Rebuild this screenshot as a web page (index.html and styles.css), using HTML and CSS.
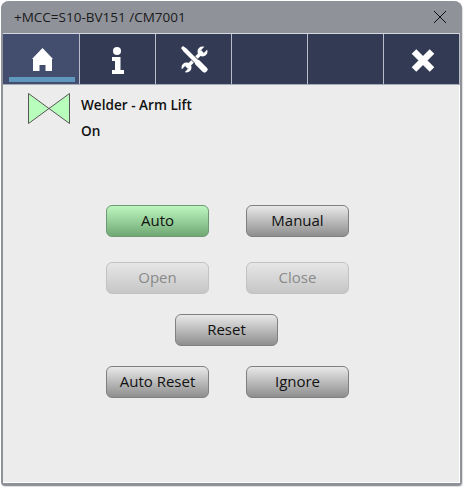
FILE: index.html
```html
<!DOCTYPE html>
<html lang="en">
<head>
    <meta charset="UTF-8">
    <meta name="viewport" content="width=device-width, initial-scale=1.0">
    <title>+MCC=S10-BV151 /CM7001</title>
    <link rel="stylesheet" href="styles.css">
</head>
<body>
    <div class="window">
        <div class="title-bar">
            <span class="title-text">+MCC=S10-BV151 /CM7001</span>
            <svg class="title-close" width="14" height="14" viewBox="0 0 14 14">
                <path d="M1 1 L13 13 M13 1 L1 13" stroke="#111" stroke-width="1" fill="none"/>
            </svg>
        </div>

        <div class="tabs">
            <div class="tab active">
                <svg class="icon-home" width="21" height="24" viewBox="0 0 21 24">
                    <path d="M10.500 0 L21 11 H0 Z M1 11 H20 V23 H13.500 V17 H7.500 V23 H1 Z" fill="#fff"/>
                </svg>
            </div>
            <div class="tab">
                <svg width="13" height="28" viewBox="0 0 13 28">
                    <circle cx="6" cy="5" r="4" fill="#fff"/>
                    <path d="M1 11 H9.500 V24 H13 V28 H1 V24 H4 V15 H1 Z" fill="#fff"/>
                </svg>
            </div>
            <div class="tab">
                <svg class="icon-tools" width="27" height="28" viewBox="0 0 27 28">
                    <g fill="none" stroke="#fff">
                        <path d="M5.500 21.500 L21.500 5.500" stroke-width="3.500"/>
                        <circle cx="21.500" cy="5.500" r="3.500" stroke-width="3"/>
                        <circle cx="5.500" cy="21.500" r="3.500" stroke-width="3"/>
                    </g>
                    <g fill="none" stroke="#333b54">
                        <path d="M22 5 L27 0 M5 22 L0 27" stroke-width="4"/>
                        <path d="M6 6 L18 18" stroke-width="5.500"/>
                    </g>
                    <path d="M0 2 L2 0 L5.500 2.500 L18 15 L15 18 L2.500 5.500 Z" fill="#fff"/>
                    <path d="M17 17 L23.500 23.500" stroke="#fff" stroke-width="6" stroke-linecap="round"/>
                </svg>
            </div>
            <div class="tab"></div>
            <div class="tab"></div>
            <div class="tab">
                <svg class="icon-close" width="24" height="24" viewBox="0 0 24 24">
                    <path d="M3 3.500 L21 21.500 M21 3.500 L3 21.500" stroke="#fff" stroke-width="6.500" fill="none"/>
                </svg>
            </div>
        </div>

        <div class="content">
            <div class="device-head">
                <svg class="valve" width="42" height="31" viewBox="0 0 42 31">
                    <path d="M0.500 0.500 L21 15.500 L41.500 0.500 V30.500 L21 15.500 L0.500 30.500 Z" fill="#b9fdbd" stroke="#555" stroke-width="1"/>
                </svg>
                <div class="device-info">
                    <div class="device-name">Welder - Arm Lift</div>
                    <div class="device-state">On</div>
                </div>
            </div>

            <div class="button-panel">
                <div class="btn-row row-mode">
                    <button class="btn btn-on">Auto</button>
                    <button class="btn">Manual</button>
                </div>
                <div class="btn-row row-open">
                    <button class="btn btn-off">Open</button>
                    <button class="btn btn-off">Close</button>
                </div>
                <div class="btn-row row-reset">
                    <button class="btn">Reset</button>
                </div>
                <div class="btn-row">
                    <button class="btn">Auto Reset</button>
                    <button class="btn">Ignore</button>
                </div>
            </div>
        </div>
    </div>
</body>
</html>
```

FILE: styles.css
```css
html, body {
    margin: 0;
    padding: 0;
    height: 100%;
    background-color: #fff;
}
body {
    font-family: "Open Sans", "Noto Sans", sans-serif;
    padding: 1px 2px 1px 1px;
    box-sizing: border-box;
    overflow: hidden;
}
.window {
    height: 100%;
    display: flex;
    flex-direction: column;
    background-color: #ececec;
    border: 2px solid #8f9299;
    border-top: none;
    border-bottom-width: 3px;
    border-radius: 8px 8px 4px 4px;
    box-sizing: border-box;
    box-shadow: 1px 1px 1px #ddd;
}
.title-bar {
    height: 32px;
    flex: none;
    margin: 0 -2px;
    padding: 0 15px 0 13px;
    display: flex;
    align-items: center;
    justify-content: space-between;
    background-color: #8f9299;
    border-radius: 8px 8px 0 0;
}
.title-text {
    font-size: 13.5px;
    color: #1a1a1a;
}
.tabs {
    flex: none;
    display: flex;
    height: 52px;
    background-color: #333b54;
    border-top: 1px solid #d5d8e0;
    border-bottom: 1px solid #a5aab8;
    box-sizing: border-box;
}
.tab {
    width: 76px;
    flex: none;
    box-sizing: border-box;
    border-right: 1px solid #b9bdca;
    display: flex;
    align-items: center;
    justify-content: center;
    padding-top: 1px;
}
.tab:first-child {
    width: 77px;
}
.tab.active {
    background-color: #434d6e;
    position: relative;
}
.tab.active::after {
    content: "";
    position: absolute;
    left: 6px;
    right: 4px;
    bottom: 2px;
    height: 5px;
    background-color: #5f97bd;
}
.icon-home {
    margin-left: 3px;
}
.icon-tools {
    margin-left: 2px;
}
.icon-close {
    margin-left: 3px;
}
.content {
    flex: 1;
    display: flex;
    flex-direction: column;
    border-right: 1px solid #fff;
    border-bottom: 1px solid #fff;
}
.device-head {
    display: flex;
    padding: 8px 0 0 25px;
    gap: 11px;
}
.valve {
    flex: none;
}
.device-info {
    font-size: 13.6px;
    font-weight: 600;
    color: #111;
    line-height: 26px;
    margin-top: -1px;
}
.button-panel {
    display: flex;
    flex-direction: column;
    width: 243px;
    margin: 61px 0 0 103px;
    gap: 20px;
}
.btn-row {
    display: flex;
    justify-content: space-between;
}
.row-mode {
    margin-bottom: 5px;
}
.row-reset {
    justify-content: center;
    padding-right: 2px;
}
.btn {
    width: 103px;
    height: 32px;
    padding: 0 0 2px;
    font-family: inherit;
    font-size: 15px;
    color: #111;
    border: 1px solid #808080;
    border-radius: 6px;
    background: linear-gradient(#e8e8e8, #8e8e8e);
}
.btn-on {
    border-color: #6d9a72;
    background: linear-gradient(#bdf7bf, #70a874);
}
.btn-off {
    color: #8a8a8a;
    border-color: #c2c2c2;
    background: linear-gradient(#e6e6e6, #c6c6c6);
}
```
